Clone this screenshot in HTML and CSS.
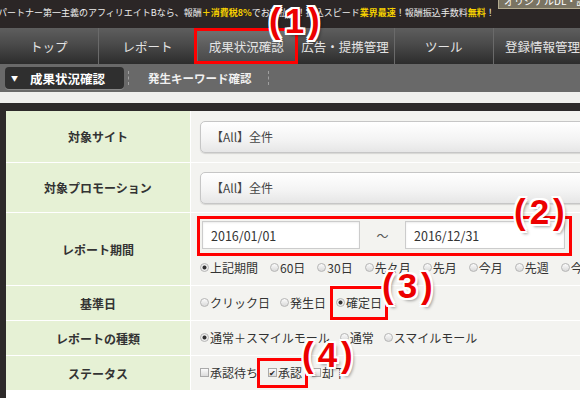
FILE: index.html
```html
<!DOCTYPE html>
<html lang="ja">
<head>
    <meta charset="UTF-8">
    <meta name="viewport" content="width=device-width, initial-scale=1.0">
    <title>成果状況確認</title>
    <link rel="stylesheet" href="styles.css">
</head>
<body>
<div class="page">

    <div class="topbar">
        <p class="catch">パートナー第一主義のアフィリエイトBなら、報酬<em>＋消費税8%</em>でお支払い！振込スピード<em>業界最速</em>！報酬振込手数料<em>無料</em>！</p>
        <span class="topbtn">オリジナルDL・説明</span>
    </div>

    <nav class="gnav">
        <a href="#">トップ</a>
        <a href="#">レポート</a>
        <a href="#" class="current">成果状況確認</a>
        <a href="#">広告・提携管理</a>
        <a href="#">ツール</a>
        <a href="#">登録情報管理</a>
    </nav>

    <div class="subnav">
        <span class="pill"><span class="tri">▼</span>成果状況確認</span>
        <span class="sep first"></span>
        <a href="#" class="sublink">発生キーワード確認</a>
        <span class="sep"></span>
    </div>

    <div class="gap"></div>

    <div class="panel">
        <div class="form">
            <div class="label">対象サイト</div>
            <div class="field">
                <select class="select"><option>【All】全件</option></select>
            </div>

            <div class="label">対象プロモーション</div>
            <div class="field">
                <select class="select"><option>【All】全件</option></select>
            </div>

            <div class="label">レポート期間</div>
            <div class="field period">
                <div class="dates">
                    <input type="text" class="date" value="2016/01/01">
                    <span class="tilde">～</span>
                    <input type="text" class="date wide" value="2016/12/31">
                </div>
                <div class="options">
                    <label class="opt"><span class="radio on"></span>上記期間</label>
                    <label class="opt"><span class="radio"></span>60日</label>
                    <label class="opt"><span class="radio"></span>30日</label>
                    <label class="opt"><span class="radio"></span>先々月</label>
                    <label class="opt"><span class="radio"></span>先月</label>
                    <label class="opt"><span class="radio"></span>今月</label>
                    <label class="opt"><span class="radio"></span>先週</label>
                    <label class="opt"><span class="radio"></span>今週</label>
                </div>
            </div>

            <div class="label">基準日</div>
            <div class="field">
                <label class="opt"><span class="radio"></span>クリック日</label>
                <label class="opt"><span class="radio"></span>発生日</label>
                <label class="opt"><span class="radio on"></span>確定日</label>
            </div>

            <div class="label">レポートの種類</div>
            <div class="field">
                <label class="opt"><span class="radio on"></span>通常＋スマイルモール</label>
                <label class="opt"><span class="radio"></span>通常</label>
                <label class="opt"><span class="radio"></span>スマイルモール</label>
            </div>

            <div class="label">ステータス</div>
            <div class="field">
                <label class="opt"><span class="check"></span>承認待ち</label>
                <label class="opt"><span class="check on">✔</span>承認</label>
                <label class="opt"><span class="check"></span>却下</label>
            </div>
        </div>
    </div>

    <!-- 注釈 -->
    <div class="mark m1"></div>
    <div class="mark m2"></div>
    <div class="mark m3"></div>
    <div class="mark m4"></div>
    <span class="num n1">(1)</span>
    <span class="num n2">(2)</span>
    <span class="num n3">(3)</span>
    <span class="num n4">(4)</span>

</div>
</body>
</html>
```

FILE: styles.css
```css
body {
    margin: 0;
    background-color: #fff;
    font-family: "Noto Sans CJK JP", sans-serif;
}
.page {
    position: relative;
    width: 580px;
    height: 398px;
    overflow: hidden;
}

/* 上部の帯 */
.topbar {
    display: flex;
    height: 28px;
    background-color: #2b2626;
    overflow: hidden;
}
.catch {
    flex: 0 0 500px;
    margin: 0 0 0 -2px;
    padding-top: 8px;
    font-size: 9px;
    line-height: 10px;
    color: #eee;
    white-space: nowrap;
    overflow: hidden;
}
.catch em {
    font-style: normal;
    font-weight: bold;
    color: #f5d000;
}
.topbtn {
    flex: none;
    margin-top: -7px;
    height: 14px;
    padding: 0 5px;
    background-color: #7a7462;
    border: 1px solid #b3ab90;
    color: #fff;
    font-size: 10px;
    line-height: 14px;
    white-space: nowrap;
}

/* グローバルナビ */
.gnav {
    display: flex;
    height: 36px;
    background: linear-gradient(#5e5e5e, #4a4a4a 45%, #2c2c2c);
}
.gnav a {
    flex: 0 0 97.75px;
    display: flex;
    align-items: center;
    justify-content: center;
    border-left: 1px solid #6a6a6a;
    color: #e4e4e4;
    font-size: 12.5px;
    text-decoration: none;
}
.gnav a:first-child {
    border-left: none;
}
.gnav a.current {
    background: linear-gradient(#747474, #5c5c5c 50%, #474747);
}

/* サブナビ */
.subnav {
    display: flex;
    align-items: center;
    height: 28px;
    padding-left: 5px;
    background-color: #696969;
}
.pill {
    display: flex;
    align-items: center;
    box-sizing: border-box;
    width: 119px;
    height: 22px;
    padding-left: 6px;
    background-color: #2f2f2f;
    border-radius: 4px;
    box-shadow: 0 1px 0 #888;
    color: #fff;
    font-size: 12.5px;
    font-weight: bold;
}
.pill .tri {
    font-size: 7px;
    margin-right: 12px;
}
.sep {
    height: 14px;
    border-left: 1px dashed #a0a0a0;
    margin-left: 16px;
}
.sep.first {
    margin-left: 4px;
    margin-right: 19px;
}
.sublink {
    color: #f0f0f0;
    font-size: 11.5px;
    font-weight: bold;
    text-decoration: none;
}

.gap {
    height: 11px;
    background-color: #efefed;
}

/* フォーム */
.panel {
    border-top: 8px solid #2d2a2a;
    border-left: 6px solid #2d2a2a;
    height: 300px;
    background-color: #fff;
}
.form {
    display: grid;
    grid-template-columns: 184px 1fr;
    grid-template-rows: 51px 49px 72px 34px 34px 34px;
    gap: 1px;
    background-color: #fff;
}
.label {
    display: flex;
    align-items: center;
    justify-content: center;
    background-color: #e6f1d5;
    color: #333;
    font-size: 12px;
    font-weight: bold;
}
.field {
    display: flex;
    align-items: center;
    gap: 10px;
    padding-left: 9px;
    background-color: #f3f3f0;
    font-size: 12px;
    color: #333;
}
.select {
    appearance: none;
    box-sizing: border-box;
    width: 400px;
    height: 32px;
    padding: 0 10px;
    border: 1px solid #c6c6c6;
    border-radius: 5px;
    background: linear-gradient(#fff, #f3f3f3 60%, #e6e6e6);
    box-shadow: 0 1px 1px rgba(0, 0, 0, 0.12);
    font-family: inherit;
    font-size: 12px;
    color: #444;
}
.field.period {
    flex-direction: column;
    align-items: flex-start;
    gap: 10px;
    padding-top: 8px;
}
.dates {
    display: flex;
    align-items: center;
    margin-left: 2px;
}
.date {
    box-sizing: border-box;
    width: 158px;
    height: 28px;
    padding: 0 8px;
    border: 1px solid #ccc;
    background-color: #fff;
    box-shadow: inset 0 1px 2px rgba(0, 0, 0, 0.08);
    font-family: inherit;
    font-size: 12.5px;
    color: #333;
}
.date.wide {
    width: 160px;
}
.tilde {
    width: 45px;
    text-align: center;
    color: #555;
}
.options {
    display: flex;
    gap: 12px;
    white-space: nowrap;
}
.opt {
    display: inline-flex;
    align-items: center;
    gap: 1px;
    line-height: 18px;
    white-space: nowrap;
}
.radio {
    box-sizing: border-box;
    width: 9px;
    height: 9px;
    margin-top: -2px;
    border: 1px solid #b5b5b5;
    border-radius: 50%;
    background: linear-gradient(#fbfbfb, #d9d9d9);
}
.radio.on {
    background: radial-gradient(circle, #333 0 1.6px, #eee 2.4px);
}
.check {
    box-sizing: border-box;
    width: 9px;
    height: 9px;
    margin-top: -2px;
    border: 1px solid #aaa;
    background: linear-gradient(#fbfbfb, #dcdcdc);
    font-size: 8px;
    line-height: 7px;
    color: #222;
    text-align: center;
}

/* 注釈（赤枠と番号） */
.mark {
    position: absolute;
    box-sizing: border-box;
    border: 3px solid #f00;
}
.m1 { left: 194px; top: 28px; width: 104px; height: 36px; }
.m2 { left: 197px; top: 216px; width: 375px; height: 40px; }
.m3 { left: 330px; top: 286px; width: 58px; height: 34px; }
.m4 { left: 257px; top: 358px; width: 51px; height: 30px; }
.num {
    position: absolute;
    font-family: "Liberation Sans", Arial, sans-serif;
    font-size: 35px;
    font-weight: bold;
    line-height: 34px;
    letter-spacing: 4px;
    color: #ec0000;
    text-shadow:
        2px 0 #fff, -2px 0 #fff, 0 2px #fff, 0 -2px #fff,
        2px 2px #fff, -2px -2px #fff, 2px -2px #fff, -2px 2px #fff,
        3px 3px 3px rgba(0, 0, 0, 0.35);
}
.n1 { left: 269px; top: 4px; }
.n2 { left: 514px; top: 195px; }
.n3 { left: 382px; top: 269px; }
.n4 { left: 302px; top: 338px; }
```
